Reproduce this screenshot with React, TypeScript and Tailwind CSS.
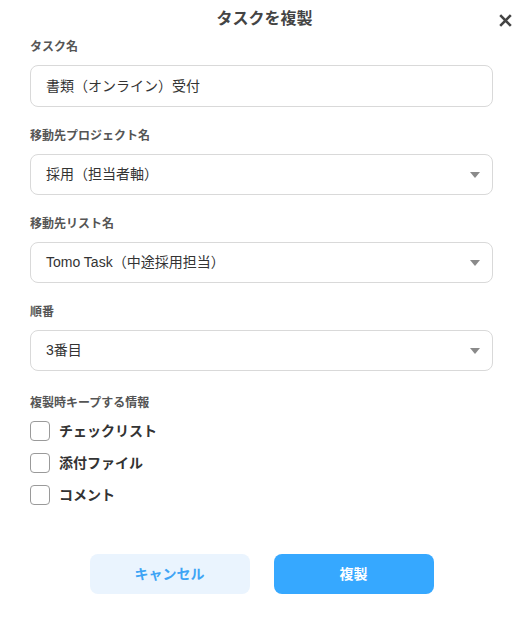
import React from "react";

const font = { fontFamily: '"Liberation Sans", "Noto Sans CJK JP", sans-serif' };

function Label({ children, className = "" }: { children: React.ReactNode; className?: string }) {
  return (
    <div className={"h-[18px] leading-[18px] text-[12px] font-bold text-[#555555] " + className}>{children}</div>
  );
}

function Caret() {
  return (
    <svg width="10" height="6" viewBox="0 0 10 6" className="shrink-0">
      <path d="M0 0 L10 0 L5 6 Z" fill="#8a8a8a" />
    </svg>
  );
}

function SelectBox({ value }: { value: string }) {
  return (
    <div className="mt-[9px] h-[41px] rounded-[8px] border border-[#d9d9d9] flex items-center justify-between pl-[15px] pr-[12px] text-[14px] text-[#333333]">
      <span>{value}</span>
      <Caret />
    </div>
  );
}

function Check({ label }: { label: string }) {
  return (
    <div className="flex items-center h-[20px]">
      <div className="w-[20px] h-[20px] rounded-[4px] border border-[#9a9a9a] bg-white" />
      <span className="ml-[9px] text-[14px] leading-[20px] font-bold text-[#333333]">{label}</span>
    </div>
  );
}

export default function App() {
  return (
    <div className="w-[529px] h-[630px] bg-white" style={font}>
      <div className="relative h-[38px] flex items-center justify-center">
        <span className="text-[16px] font-bold text-[#444444]">タスクを複製</span>
        <svg width="13" height="13" viewBox="0 0 13 13" className="absolute left-[499px] top-[14px]">
          <path d="M1.2 1.2 L11.8 11.8 M11.8 1.2 L1.2 11.8" stroke="#444444" strokeWidth="2.6" strokeLinecap="butt" />
        </svg>
      </div>
      <div className="px-[30px] w-[523px]">
        <Label>タスク名</Label>
        <div className="mt-[9px] h-[42px] rounded-[8px] border border-[#d9d9d9] flex items-center pl-[15px] text-[14px] text-[#333333]">
          書類（オンライン）受付
        </div>

        <Label className="mt-[20px]">移動先プロジェクト名</Label>
        <SelectBox value="採用（担当者軸）" />

        <Label className="mt-[20px]">移動先リスト名</Label>
        <SelectBox value="Tomo Task（中途採用担当）" />

        <Label className="mt-[20px]">順番</Label>
        <SelectBox value="3番目" />

        <Label className="mt-[23px]">複製時キープする情報</Label>
        <div className="mt-[9px] flex flex-col gap-[12px]">
          <Check label="チェックリスト" />
          <Check label="添付ファイル" />
          <Check label="コメント" />
        </div>

        <div className="mt-[49px] flex justify-center gap-[24px]">
          <button className="w-[160px] h-[40px] rounded-[8px] bg-[#eaf4fe] text-[#3ea4f5] text-[14px] font-bold">
            キャンセル
          </button>
          <button className="w-[160px] h-[40px] rounded-[8px] bg-[#36a8ff] text-white text-[14px] font-bold">
            複製
          </button>
        </div>
      </div>
    </div>
  );
}
